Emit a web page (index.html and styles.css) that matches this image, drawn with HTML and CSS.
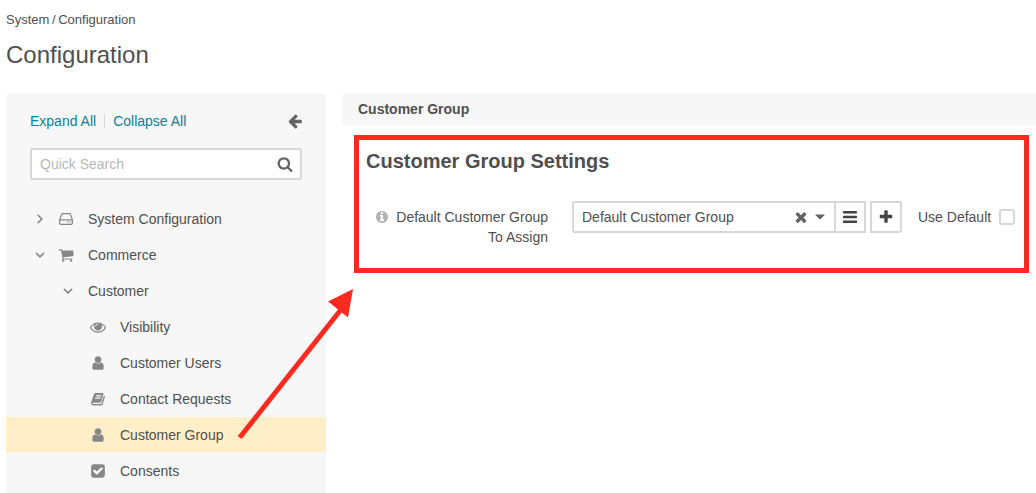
FILE: index.html
```html
<!DOCTYPE html>
<html lang="en">
<head>
<meta charset="utf-8">
<title>Configuration</title>
<link rel="stylesheet" href="styles.css">
</head>
<body>
<svg class="sprite" aria-hidden="true">
  <symbol id="user" viewBox="0 0 1792 1792"><path d="M1536 1399q0 109-62.5 187t-150.5 78h-854q-88 0-150.5-78t-62.5-187q0-85 8.5-160.5t31.5-152 58.5-131 94-89 134.5-34.5q131 128 313 128t313-128q76 0 134.5 34.5t94 89 58.5 131 31.5 152 8.500 160.500zm-256-887q0 159-112.500 271.500t-271.500 112.500-271.500-112.500-112.500-271.500 112.500-271.500 271.500-112.500 271.500 112.500 112.500 271.500z"/></symbol>
  <symbol id="down" viewBox="0 0 10 10"><path d="M1.300 3.200l3.700 3.700 3.700-3.700" fill="none" stroke="currentColor" stroke-width="1.500" stroke-linecap="round"/></symbol>
</svg>
<header class="page-head">
  <nav class="crumbs"><span>System / Configuration</span></nav>
  <h1><span>Configuration</span></h1>
</header>
<div class="layout">
  <aside class="sidebar">
    <div class="actions">
      <a class="expand">Expand All</a><a class="collapse">Collapse All</a>
      <svg class="icon back" viewBox="0 0 1792 1792"><path d="M1664 896v128q0 53-32.500 90.500t-84.500 37.500h-704l293 294q38 36 38 90t-38 90l-75 76q-37 37-90 37-52 0-91-37l-651-652q-37-37-37-90 0-52 37-91l651-650q38-38 91-38 52 0 90 38l75 74q38 38 38 91t-38 91l-293 293h704q52 0 84.500 37.500t32.500 90.500z"/></svg>
    </div>
    <div class="search">
      <span>Quick Search</span>
      <svg class="icon" viewBox="0 0 1792 1792"><path d="M1216 832q0-185-131.500-316.500t-316.500-131.500-316.500 131.500-131.500 316.500 131.500 316.500 316.500 131.500 316.500-131.500 131.500-316.500zm512 832q0 52-38 90t-90 38q-54 0-90-38l-343-342q-179 124-399 124-143 0-273.500-55.500t-225-150-150-225-55.500-273.500 55.500-273.500 150-225 225-150 273.500-55.500 273.500 55.500 225 150 150 225 55.500 273.500q0 220-124 399l343 343q37 37 37 90z"/></svg>
    </div>
    <ul class="tree">
      <li class="top">
        <svg class="chev" viewBox="0 0 10 10"><path d="M3.100 1.300l3.700 3.700-3.700 3.700" fill="none" stroke="currentColor" stroke-width="1.500" stroke-linecap="round"/></svg>
        <svg class="glyph" viewBox="0 0 16 16"><path d="M1.600 9L3.500 3.600Q3.800 2.700 4.700 2.700H11.300Q12.200 2.700 12.500 3.600L14.400 9V12Q14.400 13.300 13.100 13.300H2.900Q1.600 13.300 1.600 12ZM1.800 8.800H14.200" fill="none" stroke="currentColor" stroke-width="1.200"/><circle cx="9.700" cy="11" r=".7"/><circle cx="12.100" cy="11" r=".7"/></svg>
        <span>System Configuration</span>
      </li>
      <li class="top">
        <svg class="chev"><use href="#down"/></svg>
        <svg class="glyph" viewBox="0 0 1792 1792"><path d="M704 1536q0 52-38 90t-90 38-90-38-38-90 38-90 90-38 90 38 38 90zm896 0q0 52-38 90t-90 38-90-38-38-90 38-90 90-38 90 38 38 90zm128-1088v512q0 24-16.500 42.500t-40.500 21.500l-1044 122q13 60 13 70 0 16-24 64h920q26 0 45 19t19 45-19 45-45 19h-1024q-26 0-45-19t-19-45q0-11 8-31.500t16-36 21.500-40 15.500-29.500l-177-823h-204q-26 0-45-19t-19-45 19-45 45-19h256q16 0 28.500 6.500t19.500 15.500 13 24.500 8 26 5.500 29.500 4.500 26h1201q26 0 45 19t19 45z"/></svg>
        <span>Commerce</span>
      </li>
      <li class="mid">
        <svg class="chev"><use href="#down"/></svg>
        <span>Customer</span>
      </li>
      <li class="leaf">
        <svg class="glyph" viewBox="0 0 1792 1792"><path d="M1664 960q-152-236-381-353 61 104 61 225 0 185-131.500 316.500t-316.500 131.500-316.500-131.500-131.500-316.500q0-121 61-225-229 117-381 353 133 205 333.500 326.500t434.500 121.500 434.500-121.500 333.500-326.500zm-720-384q0-20-14-34t-34-14q-125 0-214.500 89.500t-89.500 214.500q0 20 14 34t34 14 34-14 14-34q0-86 61-147t147-61q20 0 34-14t14-34zm848 384q0 34-20 69-140 230-376.500 368.500t-499.500 138.500-499.500-139-376.500-368q-20-35-20-69t20-69q140-229 376.500-368t499.500-139 499.500 139 376.500 368q20 35 20 69z"/></svg>
        <span>Visibility</span>
      </li>
      <li class="leaf">
        <svg class="glyph"><use href="#user"/></svg>
        <span>Customer Users</span>
      </li>
      <li class="leaf">
        <svg class="glyph" viewBox="0 0 16 16"><path fill-rule="evenodd" d="M5.600 2H12.400Q13.800 2 13.400 3.400L11.300 10.500Q10.900 11.700 9.600 11.700H2.900Q2.200 11.700 2.200 12.200Q2.300 13 3.500 13H10.500Q11.300 13 11.600 12.200L13.900 4.600Q15.300 5 14.900 6.300L12.700 13.200Q12.200 14.500 10.800 14.500H3.400Q1.500 14.500 1.100 12.700Q.9 12 1.300 11L3.800 3.600Q4.300 2 5.600 2ZM6.100 4.300L5.700 5.500H11.100L11.500 4.300ZM5.400 6.600L5 7.800H10.400L10.800 6.600Z"/></svg>
        <span>Contact Requests</span>
      </li>
      <li class="leaf active">
        <svg class="glyph"><use href="#user"/></svg>
        <span>Customer Group</span>
      </li>
      <li class="leaf">
        <svg class="glyph" viewBox="0 0 1792 1792"><path d="M813 1299l614-614q19-19 19-45t-19-45l-102-102q-19-19-45-19t-45 19l-467 467-211-211q-19-19-45-19t-45 19l-102 102q-19 19-19 45t19 45l358 358q19 19 45 19t45-19zm851-883v960q0 119-84.500 203.500t-203.500 84.500h-960q-119 0-203.500-84.500t-84.500-203.500v-960q0-119 84.500-203.500t203.500-84.500h960q119 0 203.500 84.500t84.500 203.500z"/></svg>
        <span>Consents</span>
      </li>
    </ul>
  </aside>
  <main class="content">
    <div class="section-head">Customer Group</div>
    <section class="settings">
      <h2><span>Customer Group Settings</span></h2>
      <div class="field">
        <svg class="icon info" viewBox="0 0 1792 1792"><path d="M1152 1376v-160q0-14-9-23t-23-9h-96v-512q0-14-9-23t-23-9h-320q-14 0-23 9t-9 23v160q0 14 9 23t23 9h96v320h-96q-14 0-23 9t-9 23v160q0 14 9 23t23 9h448q14 0 23-9t9-23zm-128-896v-160q0-14-9-23t-23-9h-192q-14 0-23 9t-9 23v160q0 14 9 23t23 9h192q14 0 23-9t9-23zm640 416q0 209-103 385.500t-279.500 279.500-385.500 103-385.500-103-279.500-279.500-103-385.500 103-385.500 279.500-279.500 385.500-103 385.500 103 279.500 279.500 103 385.500z"/></svg>
        <label class="label">Default Customer Group<br>To Assign</label>
        <div class="select">
          <span>Default Customer Group</span>
          <svg class="icon clear" viewBox="0 0 1792 1792"><path d="M1490 1322q0 40-28 68l-136 136q-28 28-68 28t-68-28l-294-294-294 294q-28 28-68 28t-68-28l-136-136q-28-28-28-68t28-68l294-294-294-294q-28-28-28-68t28-68l136-136q28-28 68-28t68 28l294 294 294-294q28-28 68-28t68 28l136 136q28 28 28 68t-28 68l-294 294 294 294q28 28 28 68z"/></svg>
          <svg class="caret" viewBox="0 0 10 6"><path d="M.8.500H9.200Q9.900.600 9.400 1.200L5.400 5.200Q5 5.500 4.600 5.200L.6 1.200Q.1.600.8.500Z"/></svg>
        </div>
        <div class="button list">
          <svg class="bars" viewBox="0 0 14 12"><rect y="0" width="14" height="2.400" rx=".6"/><rect y="4.800" width="14" height="2.400" rx=".6"/><rect y="9.600" width="14" height="2.400" rx=".6"/></svg>
        </div>
        <div class="button add">
          <svg class="icon" viewBox="0 0 1792 1792"><path d="M1600 736v192q0 40-28 68t-68 28h-416v416q0 40-28 68t-68 28h-192q-40 0-68-28t-28-68v-416h-416q-40 0-68-28t-28-68v-192q0-40 28-68t68-28h416v-416q0-40 28-68t68-28h192q40 0 68 28t28 68v416h416q40 0 68 28t28 68z"/></svg>
        </div>
        <span class="use-default">Use Default</span>
        <span class="checkbox"></span>
      </div>
    </section>
  </main>
</div>
<svg class="pointer" viewBox="0 0 120 155"><path d="M5.700 151.500L109 21" stroke="#ff2a1f" stroke-width="5"/><path d="M119 3L94 15.500L114 31.500Z" fill="#ff2a1f"/></svg>
</body>
</html>
```
FILE: styles.css
```css
* { box-sizing: border-box; }
body {
  margin: 0;
  height: 493px;
  overflow: hidden;
  display: flex;
  flex-direction: column;
  background: #fff;
  color: #4f4f4f;
  font: 14px/20px "Liberation Sans", Arial, sans-serif;
}
svg { display: block; flex: none; fill: currentColor; }
.sprite { position: absolute; width: 0; height: 0; }
.page-head { height: 93px; padding: 10px 6px 0; }
.crumbs { font-size: 13px; line-height: 20px; word-spacing: -1px; }
h1 { margin: 9px 0 0; font-size: 24px; line-height: 32px; font-weight: 400; }
.layout { flex: 1; display: flex; gap: 16px; padding-left: 6px; }
.sidebar { width: 320px; height: 400px; background: #f7f7f7; border-radius: 4px 4px 0 0; }
.actions { display: flex; align-items: center; height: 20px; margin: 18px 23px 0 24px; color: #0c7f9b; }
.expand { padding-right: 8px; line-height: 14px; border-right: 1px solid #d5d5d5; }
.collapse { padding-left: 8px; }
.icon { width: 14px; height: 14px; }
.back { margin-left: auto; color: #646464; width: 16px; height: 16px; }
.search {
  display: flex; align-items: center; justify-content: space-between;
  height: 32px; margin: 17px 24px 0; padding: 0 7px 0 8px;
  border: 2px solid #d8d8d8; border-radius: 2px; background: #fff; color: #b8b8b8;
}
.search .icon { color: #646464; width: 16px; height: 16px; }
.tree { list-style: none; margin: 21px 0 0; padding: 0; display: grid; gap: 1px; }
.tree li { display: flex; align-items: center; height: 35px; padding-top: 1px; }
.chev { width: 10px; height: 10px; color: #808080; }
.glyph { width: 16px; height: 16px; color: #878787; }
.top { padding-left: 29px; }
.top .glyph { margin: 0 14px 0 13px; }
.mid { padding-left: 57px; }
.mid span { margin-left: 15px; }
.leaf { padding-left: 84px; }
.leaf .glyph { margin-right: 14px; }
.active { background: #ffefc9; }
.content { flex: 1; min-width: 0; }
.section-head {
  height: 32px; padding: 6px 16px; background: #f7f7f7;
  border-radius: 4px 0 0 4px; font-weight: 700;
}
.settings { width: 675px; height: 138px; margin: 10px 0 0 12px; padding: 9px 7px; border: 5px solid #ff2a1f; }
h2 { margin: 0; font-size: 20px; line-height: 24px; }
.field { display: flex; align-items: flex-start; margin-top: 28px; padding-left: 9px; }
.info { margin-top: 9px; color: #b4b4b4; }
.label { width: 159px; padding-top: 6px; text-align: right; }
.select {
  display: flex; align-items: center; width: 264px; height: 32px; margin-left: 24px; padding: 0 9px 0 8px;
  border: 2px solid #d8d8d8; border-radius: 2px 0 0 2px;
}
.clear { margin-left: auto; margin-bottom: 1px; color: #646464; width: 16px; height: 16px; }
.caret { width: 10px; height: 6px; margin-left: 6px; color: #646464; }
.button { display: flex; align-items: center; justify-content: center; width: 32px; height: 32px; border: 2px solid #d8d8d8; color: #444; }
.list { margin-left: -2px; }
.bars { width: 14px; height: 12px; }
.add { margin-left: 4px; border-radius: 0 2px 2px 0; }
.add .icon { width: 16px; height: 16px; }
.use-default { margin: 6px 0 0 16px; white-space: nowrap; }
.checkbox { flex: none; width: 16px; height: 16px; margin: 8px 0 0 8px; border: 2px solid #d8d8d8; border-radius: 3px; }
.pointer { position: absolute; left: 234px; top: 286px; width: 120px; height: 155px; }
```
